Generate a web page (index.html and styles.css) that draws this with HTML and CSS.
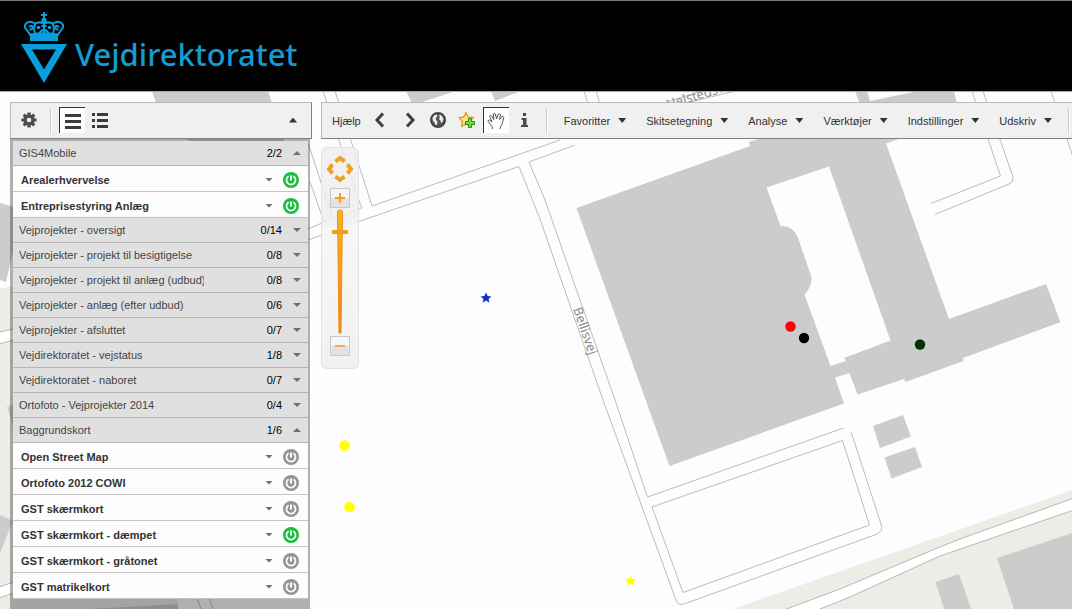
FILE: index.html
```
<!DOCTYPE html>
<html lang="da">
<head>
    <meta charset="UTF-8">
    <meta name="viewport" content="width=device-width, initial-scale=1.0">
    <title>Vejdirektoratet - Kort</title>
    <link rel="stylesheet" href="styles.css">
</head>
<body>
    <!-- Shared icons -->
    <svg class="sprite" aria-hidden="true">
        <symbol id="power" viewBox="0 0 16 16">
            <circle cx="8" cy="8" r="8" fill="currentColor"/>
            <path d="M5.6 4.3A4.5 4.5 0 1 0 10.4 4.3" fill="none" stroke="#fff" stroke-width="1.7"/>
            <path d="M8 3.5V8.5" stroke="#fff" stroke-width="2"/>
        </symbol>
    </svg>

    <header class="site-header">
        <svg class="crown" viewBox="0 0 46 72" aria-hidden="true">
            <g fill="#0a9fdb">
                <path d="M0 32H46L23 71ZM11 37.500L23 57.500L35 37.500Z" fill-rule="evenodd"/>
                <path d="M9 21.500Q23 19 37 21.500V29H9Z"/>
                <path d="M22 0H24V2H26V4H24V7H22V4H20V2H22Z"/>
                <circle cx="23" cy="8.500" r="2.700"/>
                <circle cx="17.500" cy="15.500" r="1.800"/>
                <circle cx="28.500" cy="15.500" r="1.800"/>
            </g>
            <g fill="none" stroke="#0a9fdb" stroke-width="2">
                <path d="M10 24L6.500 19Q2 14.500 5 11.500Q9 8 14 11.500"/>
                <path d="M36 24L39.500 19Q44 14.500 41 11.500Q37 8 32 11.500"/>
                <path d="M8 15Q12 12.500 11.500 16Q11 18 8.500 17.500M38 15Q34 12.500 34.500 16Q35 18 37.500 17.500"/>
                <path d="M14 22Q11 12 17 10.500Q20 10 22 11.500M32 22Q35 12 29 10.500Q26 10 24 11.500"/>
                <path d="M23 11V22M18.500 21.500Q20 17.500 23 18.500Q26 17.500 27.500 21.500M20.500 14H25.500"/>
            </g>
        </svg>
        <span class="brand">Vejdirektoratet</span>
    </header>

    <main class="map">
        <svg class="map-canvas" role="img" aria-label="Kort">
            <g transform="translate(0 -92)">
                <!-- Green areas -->
                <g fill="#ebede6">
                    <path d="M733 609L1072 490V609Z"/>
                    <path d="M0 289L178 250V609H0Z"/>
                </g>
                <!-- Roads through the green areas -->
                <g fill="#fff" stroke="#b8b8b8">
                    <path d="M784 610L840 589L935 549L960 539L1074 498V510L940 556L850 597L815 611Z"/>
                    <path d="M-1 332L14 329V340L-1 344Z"/>
                    <path d="M-1 587L14 582V593L-1 598Z"/>
                </g>
                <!-- Buildings -->
                <g fill="#ccc">
                    <path fill-rule="evenodd" d="M576.500 208L750 146L749 142L870 101L918 91H954L960 117L886 143.500L949 319L1046 284L1060.500 322L963 358L963.500 361L905.500 382L904 379L857.500 394.500L849.500 373L835 377.500L844 403.500L669.500 466Z
                        M766.500 187.500L780.500 226Q793 225 798 238L811.500 277Q812 287 804.500 294.500L830.500 366L846 361L844 358L890.500 340.500L829 166.500Z"/>
                    <path d="M873 426L903 415L911 436.500L880 448Z"/>
                    <path d="M884.500 457.500L915 447L922 467L891.500 478.500Z"/>
                    <path d="M855 91H867L871 104H860Z"/>
                    <path d="M406 91L413 105L456 91ZM491 91L495 101L521 91Z"/>
                    <path d="M152 91H268L284 139V141H190L165 130Z"/>
                    <path d="M0 203L14 207V248L6 282L0 280Z"/>
                    <path d="M7 407L14 404V430ZM0 515L13 521L0 553Z"/>
                    <path d="M90 609L178 604V609Z"/>
                    <path d="M997 558L1072 533V609H1014Z"/>
                    <path d="M935.500 582L959 574L971 609H944Z"/>
                </g>
                <!-- Road edges -->
                <g fill="none" stroke="#bcbcbc">
                    <path d="M308 143L333 219L361.500 208L338.500 139L323 91"/>
                    <path d="M310 182L324 222L308 229"/>
                    <path d="M335 91L372 206L560 140"/>
                    <path d="M308 240L366 219L519 166.500L540 219L603 400L676 600Q678 606 684 604L876 534.500Q884 531 881 524L851 431.500"/>
                    <path d="M575 145L529 162L545 200L615 400L647.500 497L843.500 428"/>
                    <path d="M652 507L683 592.500L869.500 525L842.500 440.500Z"/>
                    <path d="M972 91L1000.500 176L931 203.500"/>
                    <path d="M983 91L1012 174Q1015 181 1009 184L935 214.500"/>
                    <path d="M1051 91L1073 157"/>
                    <path d="M584 91L588 104M596 91L600 104M660 104L702 91M682 104L735 91"/>
                    <path d="M197 598L201 609M209 598L213 609"/>
                </g>
                <!-- Street names -->
                <g class="street">
                    <text transform="translate(573 309) rotate(71)">Bellisvej</text>
                    <text transform="translate(668 109) rotate(-17)">Helstedsvej</text>
                </g>
                <!-- Project markers -->
                <circle cx="790.500" cy="326.500" r="5.200" fill="#f00"/>
                <circle cx="804" cy="338" r="5.200"/>
                <circle cx="920" cy="344.500" r="5.200" fill="#030"/>
                <circle cx="344.500" cy="445.500" r="5.200" fill="#ff0"/>
                <circle cx="349.500" cy="507" r="5.200" fill="#ff0"/>
                <path transform="translate(486 298)" d="M0 -5.500L1.600 -1.900L5.400 -1.600L2.500 .9L3.400 4.700L0 2.600L-3.400 4.700L-2.500 .9L-5.400 -1.600L-1.600 -1.900Z" fill="#0a32c8"/>
                <path transform="translate(630.500 581)" d="M0 -5.500L1.600 -1.900L5.400 -1.600L2.500 .9L3.400 4.700L0 2.600L-3.400 4.700L-2.500 .9L-5.400 -1.600L-1.600 -1.900Z" fill="#ff0"/>
            </g>
        </svg>

        <aside class="sidebar">
            <div class="sidebar-tools">
                <button class="icon-btn" aria-label="Indstillinger">
                    <svg width="16" height="16" viewBox="-8 -8 16 16">
                        <circle r="4" fill="none" stroke="#4d4d4d" stroke-width="3.400"/>
                        <path d="M0 -7.600V-4.500M0 7.600V4.500M-7.600 0H-4.500M7.600 0H4.500M-5.300 -5.300L-3.300 -3.300M5.300 5.300L3.300 3.300M-5.300 5.300L-3.300 3.300M5.300 -5.300L3.300 -3.300" stroke="#4d4d4d" stroke-width="3.200"/>
                    </svg>
                </button>
                <span class="divider"></span>
                <button class="icon-btn pressed" aria-label="Lagliste">
                    <svg width="16" height="16" fill="#3c3c3c"><path d="M0 1H16V4H0ZM0 7H16V10H0ZM0 13H16V16H0Z"/></svg>
                </button>
                <button class="icon-btn" aria-label="Signaturforklaring">
                    <svg width="16" height="16" fill="#3c3c3c"><path d="M0 1H3V4H0ZM5 1H16V4H5ZM0 7H3V10H0ZM5 7H16V10H5ZM0 13H3V16H0ZM5 13H16V16H5Z"/></svg>
                </button>
                <button class="icon-btn collapse" aria-label="Skjul"><span class="arrow up dark"></span></button>
            </div>

            <div class="layers">
                <button class="group"><span class="group-name">GIS4Mobile</span><span class="count">2/2</span><span class="arrow up"></span></button>
                <div class="layer"><label class="layer-name" for="l1">Arealerhvervelse</label><span class="arrow"></span><span class="toggle"><input type="checkbox" id="l1" checked><svg><use href="#power"/></svg></span></div>
                <div class="layer"><label class="layer-name" for="l2">Entreprisestyring Anlæg</label><span class="arrow"></span><span class="toggle"><input type="checkbox" id="l2" checked><svg><use href="#power"/></svg></span></div>
                <button class="group"><span class="group-name">Vejprojekter - oversigt</span><span class="count">0/14</span><span class="arrow"></span></button>
                <button class="group"><span class="group-name">Vejprojekter - projekt til besigtigelse</span><span class="count">0/8</span><span class="arrow"></span></button>
                <button class="group"><span class="group-name">Vejprojekter - projekt til anlæg (udbud)</span><span class="count">0/8</span><span class="arrow"></span></button>
                <button class="group"><span class="group-name">Vejprojekter - anlæg (efter udbud)</span><span class="count">0/6</span><span class="arrow"></span></button>
                <button class="group"><span class="group-name">Vejprojekter - afsluttet</span><span class="count">0/7</span><span class="arrow"></span></button>
                <button class="group"><span class="group-name">Vejdirektoratet - vejstatus</span><span class="count">1/8</span><span class="arrow"></span></button>
                <button class="group"><span class="group-name">Vejdirektoratet - naboret</span><span class="count">0/7</span><span class="arrow"></span></button>
                <button class="group"><span class="group-name">Ortofoto - Vejprojekter 2014</span><span class="count">0/4</span><span class="arrow"></span></button>
                <button class="group"><span class="group-name">Baggrundskort</span><span class="count">1/6</span><span class="arrow up"></span></button>
                <div class="layer"><label class="layer-name" for="l3">Open Street Map</label><span class="arrow"></span><span class="toggle"><input type="checkbox" id="l3"><svg><use href="#power"/></svg></span></div>
                <div class="layer"><label class="layer-name" for="l4">Ortofoto 2012 COWI</label><span class="arrow"></span><span class="toggle"><input type="checkbox" id="l4"><svg><use href="#power"/></svg></span></div>
                <div class="layer"><label class="layer-name" for="l5">GST skærmkort</label><span class="arrow"></span><span class="toggle"><input type="checkbox" id="l5"><svg><use href="#power"/></svg></span></div>
                <div class="layer"><label class="layer-name" for="l6">GST skærmkort - dæmpet</label><span class="arrow"></span><span class="toggle"><input type="checkbox" id="l6" checked><svg><use href="#power"/></svg></span></div>
                <div class="layer"><label class="layer-name" for="l7">GST skærmkort - gråtonet</label><span class="arrow"></span><span class="toggle"><input type="checkbox" id="l7"><svg><use href="#power"/></svg></span></div>
                <div class="layer"><label class="layer-name" for="l8">GST matrikelkort</label><span class="arrow"></span><span class="toggle"><input type="checkbox" id="l8"><svg><use href="#power"/></svg></span></div>
            </div>
        </aside>

        <div class="workspace">
            <nav class="toolbar">
                <button class="help">Hjælp</button>
                <div class="tools">
                    <button class="icon-btn" aria-label="Forrige">
                        <svg width="16" height="16"><path d="M11 1.500L5 8L11 14.500" fill="none" stroke="#3f3f3f" stroke-width="3"/></svg>
                    </button>
                    <button class="icon-btn" aria-label="Næste">
                        <svg width="16" height="16"><path d="M6 1.500L12 8L6 14.500" fill="none" stroke="#3f3f3f" stroke-width="3"/></svg>
                    </button>
                    <button class="icon-btn" aria-label="Hele kortet">
                        <svg width="16" height="16">
                            <circle cx="8" cy="8" r="7" fill="#555" stroke="#444" stroke-width="2"/>
                            <path d="M2.500 6Q3.500 3 6 2.500L7.500 3.500L6.500 5.500L5.500 6.500L6 8L7.500 9.500L7 12.500L5.500 13Q5 10 3 9ZM10 2.500Q13 4 13.500 7L12.500 10L11 11L10.500 8.500L9 7L10 5L9 4Z" fill="#eee"/>
                        </svg>
                    </button>
                    <button class="icon-btn" aria-label="Tilføj favorit">
                        <svg width="18" height="18">
                            <path d="M8 1.500L10.200 6L15.500 6.500L11.800 10L12.500 15L8 12.800L3.500 15.500L4.300 10L1 6.800L5.800 6Z" fill="#fbe08a" stroke="#dfa02a" stroke-width="1.400" stroke-linejoin="round"/>
                            <path d="M10.500 7.500H13.500V10.500H16.500V13.500H13.500V16.500H10.500V13.500H7.500V10.500H10.500Z" fill="#6fe02c" stroke="#2f8a10"/>
                        </svg>
                    </button>
                    <button class="icon-btn pressed" aria-label="Panorér">
                        <svg width="18" height="18">
                            <path d="M5.500 17Q5.500 14.500 3.500 12.500L1 9.500Q1 7.800 2.700 8.200L5 10L2.600 4.500Q2.800 2.900 4.300 3.600L6.800 7.500L6.300 2Q7.200 .6 8.400 1.800L9.600 7L11.400 2Q12.700 1.200 13.400 2.600L12.600 7.500L15 4.600Q16.600 4 16.800 5.500L15.500 10.500Q15 13 13.500 14.500L13 17" fill="#fff" stroke="#555" stroke-linejoin="round"/>
                        </svg>
                    </button>
                    <button class="icon-btn" aria-label="Information">
                        <svg width="8" height="14" fill="#4a4a4a"><path d="M2 0H5V3H2ZM.5 5H5.500V12H7V14H0V12H2V7H.5Z"/></svg>
                    </button>
                </div>
                <span class="divider"></span>
                <div class="menus">
                    <button class="menu">Favoritter<span class="arrow dark"></span></button>
                    <button class="menu">Skitsetegning<span class="arrow dark"></span></button>
                    <button class="menu">Analyse<span class="arrow dark"></span></button>
                    <button class="menu">Værktøjer<span class="arrow dark"></span></button>
                    <button class="menu">Indstillinger<span class="arrow dark"></span></button>
                    <button class="menu">Udskriv<span class="arrow dark"></span></button>
                </div>
                <span class="divider last"></span>
            </nav>

            <div class="zoom-panel">
                <button class="pan" aria-label="Flyt kortet">
                    <svg width="28" height="28" fill="none" stroke="#f0a01e" stroke-width="4">
                        <path d="M9.500 6.500L14 3L18.500 6.500M9.500 21.500L14 25L18.500 21.500M6.500 9.500L3 14L6.500 18.500M21.500 9.500L25 14L21.500 18.500"/>
                    </svg>
                </button>
                <button class="zoom-btn" aria-label="Zoom ind">
                    <svg width="10" height="10"><path d="M5 0V10M0 5H10" stroke="#f0a01e" stroke-width="2"/></svg>
                </button>
                <svg class="zoom-track" width="18" height="126" aria-hidden="true">
                    <defs>
                        <linearGradient id="track" x2="0" y2="1"><stop offset="0" stop-color="#fdb515"/><stop offset="1" stop-color="#f57f17"/></linearGradient>
                    </defs>
                    <path d="M6.500 3Q6.500 1 9 1Q11.500 1 11.500 3L10 124H8Z" fill="url(#track)" stroke="#ef8f1a"/>
                    <rect x="1" y="21" width="16" height="4" rx="1" fill="#f59a1c"/>
                </svg>
                <button class="zoom-btn" aria-label="Zoom ud">
                    <svg width="10" height="10"><path d="M0 5H10" stroke="#f0a860" stroke-width="2"/></svg>
                </button>
            </div>
        </div>
    </main>
</body>
</html>
```
FILE: styles.css
```
/* General styles */
* {
    box-sizing: border-box;
}

body {
    margin: 0;
    min-height: 100vh;
    display: flex;
    flex-direction: column;
    font-family: "Liberation Sans", Arial, sans-serif;
    font-size: 11px;
    color: #333;
}

button {
    font: inherit;
    color: inherit;
    border: none;
    background: none;
    padding: 0;
    cursor: pointer;
}

svg {
    display: block;
    flex: none;
}

.sprite {
    position: absolute;
    width: 0;
    height: 0;
}

/* Header with logo */
.site-header {
    display: flex;
    height: 92px;
    padding: 11px 21px;
    gap: 8px;
    background: #000;
    border-top: 1px solid #777;
    border-bottom: 1px solid #aaa;
}

.crown {
    width: 46px;
    height: 72px;
}

.brand {
    margin-top: 20px;
    font-family: "Noto Sans", sans-serif;
    font-size: 31px;
    font-weight: 500;
    line-height: 44px;
    color: #149bd2;
}

/* Map */
.map {
    position: relative;
    flex: 1;
    display: flex;
    align-items: stretch;
    gap: 9px;
    padding: 10px 0 0 10px;
    background: #fdfcfe;
    overflow: hidden;
}

.map-canvas {
    position: absolute;
    left: 0;
    top: 0;
    width: 100%;
    height: 100%;
}

.street {
    font-family: "Noto Sans", sans-serif;
    font-size: 13px;
    fill: #8c8c8c;
}

/* Shared bits */
.arrow {
    flex: none;
    width: 8px;
    height: 4px;
    background: #707070;
    clip-path: polygon(0 0, 100% 0, 50% 100%);
}

.arrow.up {
    clip-path: polygon(50% 0, 100% 100%, 0 100%);
}

.arrow.dark {
    height: 5px;
    background: #333;
}

.icon-btn {
    display: flex;
    align-items: center;
    justify-content: center;
    width: 26px;
    height: 26px;
    margin-bottom: 1px;
}

.pressed {
    background: #fff;
    border-top: 1px solid #333;
    border-left: 1px solid #333;
}

.divider {
    width: 2px;
    height: 26px;
    background: #ccc;
    border-right: 1px solid #fff;
}

/* Sidebar */
.sidebar {
    position: relative;
    width: 302px;
    display: flex;
    flex-direction: column;
}

.sidebar-tools,
.toolbar {
    display: flex;
    align-items: center;
    height: 37px;
    background: #f0f0f0;
    border: 1px solid #b9b9b9;
    border-bottom-color: #7f7f7f;
}

.sidebar-tools {
    gap: 2px;
    padding: 0 5px;
    border-right-color: #7f7f7f;
}

.sidebar-tools .divider {
    margin: 0 5px 0 6px;
}

.sidebar-tools .collapse {
    margin-left: auto;
}

.layers {
    flex: 1;
    width: 300px;
    padding: 2px 2px 10px 3px;
    background: rgba(0, 0, 0, 0.3);
}

.group,
.layer {
    display: flex;
    align-items: center;
    width: 100%;
}

.group {
    height: 25px;
    padding: 0 7px 0 6px;
    background: #e0e0e0;
    border-bottom: 1px solid #b5b5b5;
    text-align: left;
}

.group-name {
    width: 185px;
    overflow: hidden;
    white-space: nowrap;
    color: #444;
}

.count {
    flex: 1;
    margin-right: 11px;
    text-align: right;
    color: #000;
}

.layer {
    height: 26px;
    padding: 2px 9px 0 8px;
    gap: 10px;
    background: #fdfdfd;
    border-bottom: 1px solid #c4c4c4;
    font-weight: bold;
}

.layer-name {
    flex: 1;
}

.toggle {
    position: relative;
    width: 16px;
    height: 16px;
}

.toggle input {
    position: absolute;
    inset: 0;
    width: 16px;
    height: 16px;
    margin: 0;
    opacity: 0;
    cursor: pointer;
}

.toggle svg {
    width: 16px;
    height: 16px;
    color: #959595;
}

.toggle input:checked + svg {
    color: #17bf3c;
}

/* Toolbar */
.workspace {
    position: relative;
    flex: 1;
    min-width: 0;
}

.toolbar {
    padding: 0 0 0 10px;
    border-right: none;
}

.tools {
    display: flex;
    gap: 3px;
    margin: 0 8px 0 6px;
}

.menus {
    display: flex;
    gap: 20px;
    margin-left: 16px;
}

.menu {
    display: flex;
    align-items: center;
    gap: 8px;
    white-space: nowrap;
}

.last {
    margin-left: 16px;
}

/* Zoom control */
.zoom-panel {
    display: flex;
    flex-direction: column;
    align-items: center;
    width: 38px;
    height: 222px;
    margin-top: 8px;
    padding-top: 7px;
    background: linear-gradient(170deg, rgba(238, 238, 238, 0.8) 35%, rgba(246, 246, 244, 0.9) 36%, rgba(240, 240, 238, 0.9));
    border: 1px solid #e2e2e2;
    border-radius: 6px;
}

.zoom-btn {
    display: flex;
    align-items: center;
    justify-content: center;
    width: 20px;
    height: 20px;
    background: linear-gradient(#f6f6f6 50%, #e2e2e2 50%);
    border: 1px solid #c8c8c8;
}

.pan {
    margin-bottom: 5px;
}

.zoom-track {
    margin: 1px 0;
}
```
